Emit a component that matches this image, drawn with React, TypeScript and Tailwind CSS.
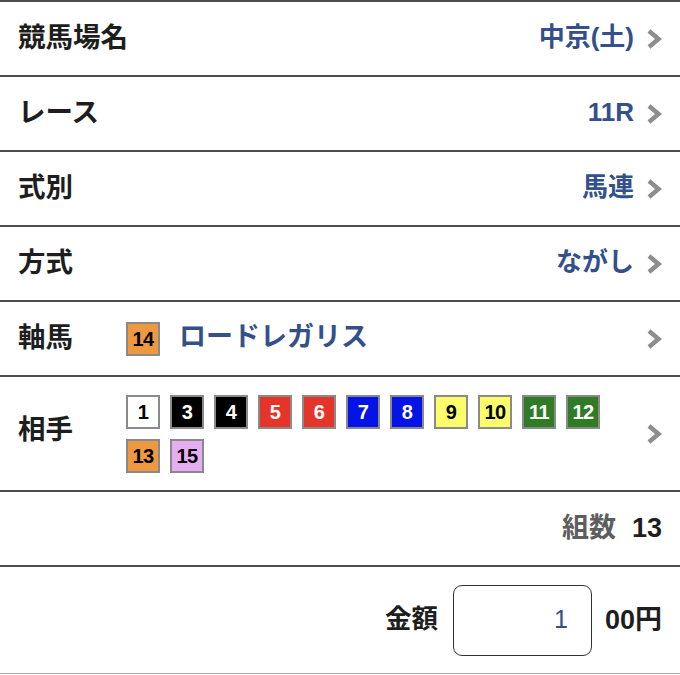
import React from "react";

const font = { fontFamily: '"Liberation Sans", "Noto Sans CJK JP", sans-serif' };

type Horse = { no: number; bg: string; fg: string };

const partners: Horse[] = [
  { no: 1, bg: "bg-white", fg: "text-black" },
  { no: 3, bg: "bg-black", fg: "text-white" },
  { no: 4, bg: "bg-black", fg: "text-white" },
  { no: 5, bg: "bg-[#e5352b]", fg: "text-white" },
  { no: 6, bg: "bg-[#e5352b]", fg: "text-white" },
  { no: 7, bg: "bg-[#0514e6]", fg: "text-white" },
  { no: 8, bg: "bg-[#0514e6]", fg: "text-white" },
  { no: 9, bg: "bg-[#fdfc6b]", fg: "text-black" },
  { no: 10, bg: "bg-[#fdfc6b]", fg: "text-black" },
  { no: 11, bg: "bg-[#2f7b26]", fg: "text-white" },
  { no: 12, bg: "bg-[#2f7b26]", fg: "text-white" },
  { no: 13, bg: "bg-[#ee983f]", fg: "text-black" },
  { no: 15, bg: "bg-[#e6adf1]", fg: "text-black" },
];

function Chevron() {
  return (
    <svg width="16" height="20" viewBox="0 0 16 20" className="shrink-0">
      <polyline
        points="3,2 12.5,10 3,18"
        fill="none"
        stroke="#8d8d8d"
        strokeWidth="4.5"
        strokeLinejoin="miter"
      />
    </svg>
  );
}

function NumBox({ h }: { h: Horse }) {
  return (
    <div
      className={`w-[34px] h-[34px] flex items-center justify-center border-2 border-[#8a8a8a] text-[20px] font-bold tracking-[-0.5px] ${h.bg} ${h.fg}`}
    >
      {h.no}
    </div>
  );
}

function SelectRow({ label, value }: { label: string; value: string }) {
  return (
    <div className="h-[75px] flex items-center border-t-2 border-[#4d4d4d] pl-[18px] pr-[18px]">
      <span className="text-[27.5px] font-bold text-[#1e1e1e] -mt-[2px]">{label}</span>
      <span className="ml-auto text-[26px] font-bold text-[#33508a] mr-[12px] -mt-[2px]">{value}</span>
      <Chevron />
    </div>
  );
}

export default function App() {
  return (
    <div className="w-[680px] h-[675px] bg-white" style={font}>
      <SelectRow label="競馬場名" value="中京(土)" />
      <SelectRow label="レース" value="11R" />
      <SelectRow label="式別" value="馬連" />
      <SelectRow label="方式" value="ながし" />

      {/* 軸馬 */}
      <div className="h-[75px] flex items-center border-t-2 border-[#4d4d4d] pl-[18px] pr-[18px]">
        <span className="w-[108px] text-[27.5px] font-bold text-[#1e1e1e] -mt-[2px]">軸馬</span>
        <NumBox h={{ no: 14, bg: "bg-[#ee983f]", fg: "text-black" }} />
        <span className="ml-[19px] text-[27px] font-bold text-[#33508a] -mt-[2px]">ロードレガリス</span>
        <span className="ml-auto">
          <Chevron />
        </span>
      </div>

      {/* 相手 */}
      <div className="h-[115px] flex items-center border-t-2 border-[#4d4d4d] pl-[18px] pr-[18px]">
        <span className="w-[108px] text-[27.5px] font-bold text-[#1e1e1e] -mt-[8px]">相手</span>
        <div className="w-[480px] flex flex-wrap gap-[10px]">
          {partners.map((h) => (
            <NumBox key={h.no} h={h} />
          ))}
        </div>
        <span className="ml-auto">
          <Chevron />
        </span>
      </div>

      {/* 組数 */}
      <div className="h-[75px] flex items-center justify-end border-t-2 border-[#4d4d4d] pr-[18px]">
        <span className="text-[27px] font-bold text-[#5e5e5e]">組数</span>
        <span className="ml-[16px] text-[27px] font-bold text-[#1e1e1e]">13</span>
      </div>

      {/* 金額 */}
      <div className="h-[109px] flex items-center justify-end border-t-2 border-b border-t-[#4d4d4d] border-b-[#ababab] pr-[18px]">
        <span className="text-[26.5px] font-bold text-[#1e1e1e]">金額</span>
        <div className="ml-[15px] w-[139px] h-[71px] border-[1.5px] border-[#333] rounded-[9px] flex items-center justify-end pr-[23px]">
          <span className="text-[25px] text-[#33508a]">1</span>
        </div>
        <span className="ml-[13px] text-[27px] font-bold text-[#1e1e1e]">00円</span>
      </div>
    </div>
  );
}
